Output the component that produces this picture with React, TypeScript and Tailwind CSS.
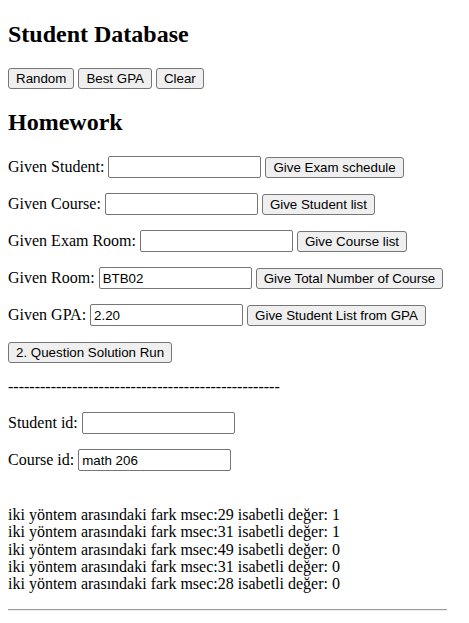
const btn =
  "inline-block align-middle h-[21px] px-[7px] border border-[#767676] rounded-[3px] bg-[#efefef] text-[13.33px] leading-[15px] text-black font-['Liberation_Sans',Arial,sans-serif]";
const input =
  "inline-block align-middle w-[153px] h-[22px] px-[3px] border border-[#767676] rounded-[2px] bg-white text-[13.33px] text-black font-['Liberation_Sans',Arial,sans-serif] outline-none";

function Row({
  label,
  value = '',
  action,
}: {
  label: string;
  value?: string;
  action?: string;
}) {
  return (
    <div className="flex items-center h-[22px] whitespace-pre">
      <span>{label} </span>
      <input className={input} defaultValue={value} />
      {action && (
        <>
          <span> </span>
          <button className={btn}>{action}</button>
        </>
      )}
    </div>
  );
}

const results = [
  ['29', '1'],
  ['31', '1'],
  ['49', '0'],
  ['31', '0'],
  ['28', '0'],
];

export default function App() {
  return (
    <div className="min-h-screen bg-white px-2 text-[16px] text-black font-['Liberation_Serif','Times_New_Roman',serif]">
      <h2 className="pt-[20px] text-[24px] font-bold leading-[28px]">Student Database</h2>
      <div className="mt-[20px] flex gap-[4px]">
        <button className={btn}>Random</button>
        <button className={btn}>Best GPA</button>
        <button className={btn}>Clear</button>
      </div>

      <h2 className="mt-[19px] text-[24px] font-bold leading-[28px]">Homework</h2>
      <div className="mt-[20px] flex flex-col gap-[15px]">
        <Row label="Given Student:" action="Give Exam schedule" />
        <Row label="Given Course:" action="Give Student list" />
        <Row label="Given Exam Room:" action="Give Course list" />
        <Row label="Given Room:" value="BTB02" action="Give Total Number of Course" />
        <Row label="Given GPA:" value="2.20" action="Give Student List from GPA" />
        <div className="flex items-center h-[22px]">
          <button className={btn}>2. Question Solution Run</button>
        </div>
      </div>

      <p className="mt-[15px] leading-[18px]">
        ---------------------------------------------------
      </p>

      <div className="mt-[16px] flex flex-col gap-[15px]">
        <Row label="Student id:" />
        <Row label="Course id:" value="math 206" />
      </div>

      <div className="mt-[35px] leading-[17.25px]">
        {results.map(([ms, v], i) => (
          <div key={i}>
            iki yöntem arasındaki fark msec:{ms} isabetli değer: {v}
          </div>
        ))}
      </div>

      <hr className="mt-[17px] w-[439px] border-t border-b border-t-[#9a9a9a] border-b-[#eeeeee]" />
    </div>
  );
}
